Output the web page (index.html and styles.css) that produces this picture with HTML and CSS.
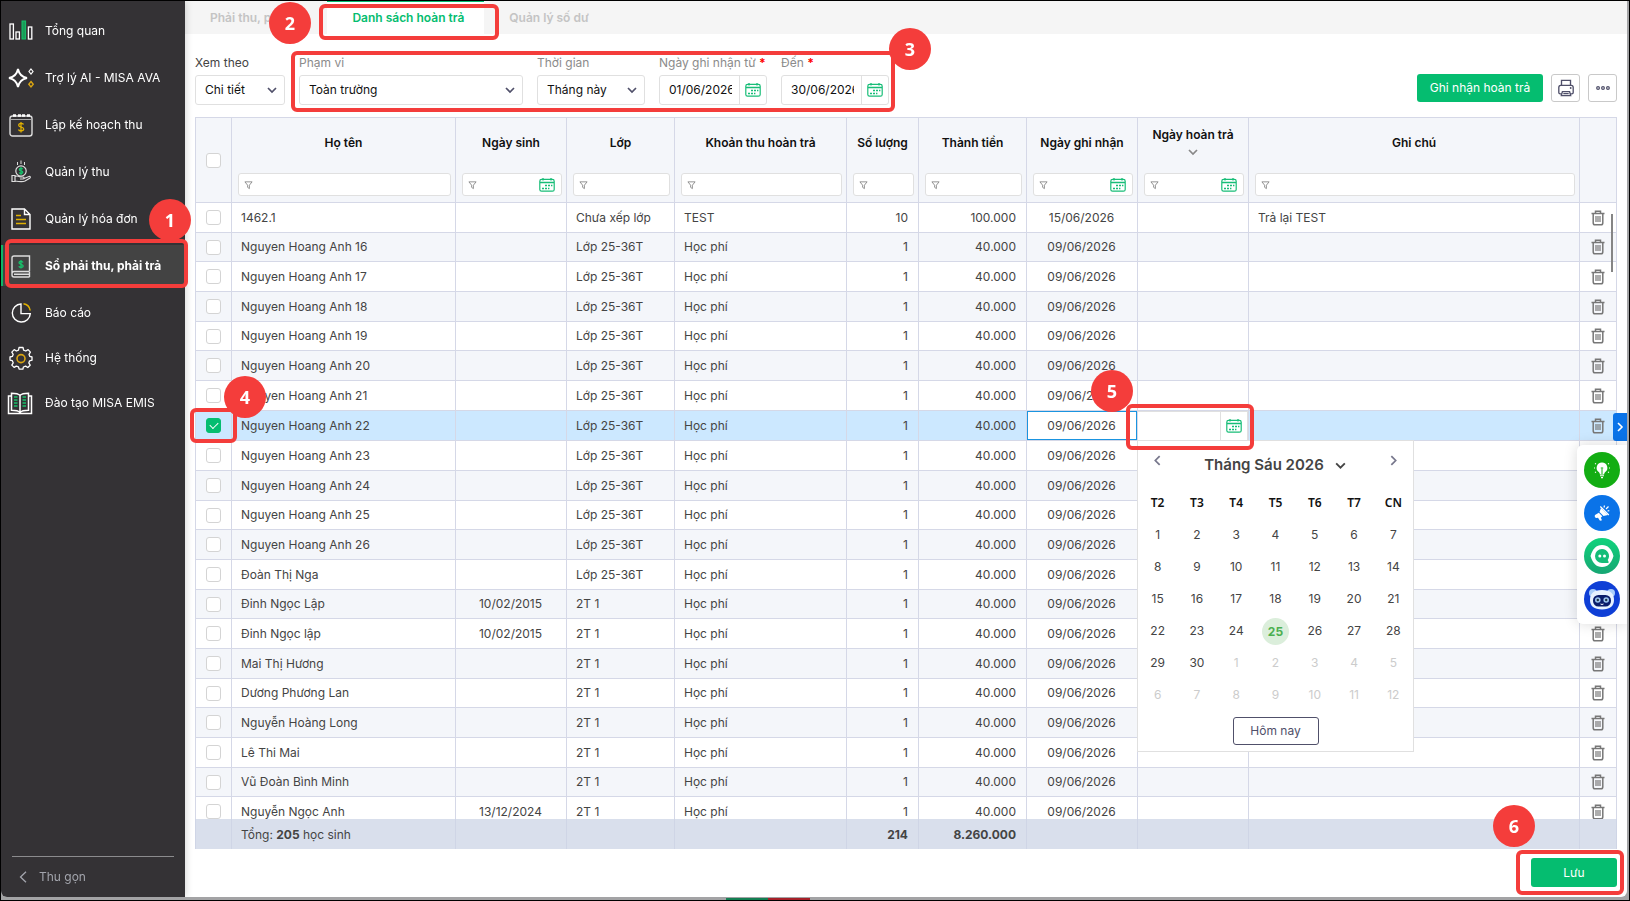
FILE: index.html
```html
<!DOCTYPE html>
<html lang="vi">
<head>
  <meta charset="UTF-8" />
  <title>Sổ phải thu, phải trả – Danh sách hoàn trả</title>
  <link rel="stylesheet" href="styles.css">
</head>
<body>

<!-- icon sprite -->
<svg class="sprite" width="0" height="0" aria-hidden="true">
  <symbol id="i-down" viewBox="0 0 12 12"><path d="M2 4l4 4 4-4" fill="none" stroke="currentColor" stroke-width="1.7"/></symbol>
  <symbol id="i-left" viewBox="0 0 12 12"><path d="M8 2L4 6l4 4" fill="none" stroke="currentColor" stroke-width="1.6"/></symbol>
  <symbol id="i-right" viewBox="0 0 12 12"><path d="M4 2l4 4-4 4" fill="none" stroke="currentColor" stroke-width="1.6"/></symbol>
  <symbol id="i-filter" viewBox="0 0 10 10"><path d="M1 1.5h8L6 5.2V9L4 7.6V5.2z" fill="none" stroke="currentColor" stroke-width="1"/></symbol>
  <symbol id="i-cal" viewBox="0 0 16 14">
    <rect x=".8" y="1.4" width="14.4" height="11.8" rx="1.8" fill="none" stroke="currentColor" stroke-width="1.2"/>
    <path d="M1 4.5h14M4 0v2.6M12 0v2.6" stroke="currentColor" stroke-width="1.3"/>
    <path d="M6 7.4h2M9 7.4h2M12 7.4h1.4M3 10.4h2M6 10.4h2M9 10.4h1.4" stroke="currentColor" stroke-width="1.5"/>
  </symbol>
  <symbol id="i-trash" viewBox="0 0 14 16">
    <path d="M.5 3.4h13M4.5 3V1.2h5V3" fill="none" stroke="currentColor" stroke-width="1.5"/>
    <path d="M2.2 4v9a1.8 1.8 0 0 0 1.8 1.8h6a1.8 1.8 0 0 0 1.8-1.8V4" fill="none" stroke="currentColor" stroke-width="1.5"/>
    <path d="M5 6v6M7 6v6M9 6v6" stroke="currentColor" stroke-width="1.2"/>
  </symbol>
</svg>

<div class="app">
  <aside class="sidebar">
    <nav>
      <ul class="menu">
        <li><a href="#"><svg viewBox="0 0 24 24"><g fill="none" stroke="#fff" stroke-width="1.3"><rect x="1" y="5" width="3.4" height="15"/><rect x="7" y="13" width="3.4" height="7"/><rect x="19.4" y="8" width="3.4" height="12"/></g><rect x="13" y="2" width="3.6" height="18" fill="#1a9c58" stroke="#17c26b"/></svg>Tổng quan</a></li>
        <li><a href="#"><svg class="wide" viewBox="0 0 28 24"><path d="M11 3Q12.500 10.500 20 12 12.500 13.500 11 21 9.500 13.500 2 12 9.500 10.500 11 3z" fill="none" stroke="#fff" stroke-width="1.9"/><path d="M24 3l2 2.500-2 2.500-2-2.500z" fill="none" stroke="#fff" stroke-width="1.2"/><path d="M24 15.500l2.200 2.700-2.200 2.700-2.200-2.700z" fill="none" stroke="#d9a412" stroke-width="1.4"/></svg>Trợ lý AI - MISA AVA</a></li>
        <li><a href="#"><svg viewBox="0 0 24 24"><rect x="1" y="3" width="22" height="20" rx="2.500" fill="none" stroke="#ddd" stroke-width="1.4"/><path d="M1 6.500h22" stroke="#aaa"/><path d="M4 2.500h3M9 2.500h3M13 2.500h3M18 2.500h3" stroke="#fff" stroke-width="2.600"/><path d="M14.500 11.500C14 9.800 9.700 9.800 9.700 12.200c0 2.500 5 1.400 5 3.900 0 2.400-4.600 2.400-5.200.4M12 9v10.500" fill="none" stroke="#e0b000" stroke-width="1.3"/></svg>Lập kế hoạch thu</a></li>
        <li><a href="#"><svg viewBox="0 0 24 24"><circle cx="12" cy="11" r="5.200" fill="none" stroke="#ddd" stroke-width="1.2"/><path d="M8.500 2v3M12 .5v3.500M15.500 2v3" stroke="#ddd"/><path d="M13.700 9.300c-.5-1.300-3.400-1.300-3.400.3 0 1.700 3.500 1 3.500 2.700 0 1.600-3 1.600-3.600.3M12 7v8" fill="none" stroke="#17c26b" stroke-width="1.3"/><path d="M3 15.500h3v6H3zM6 16.500c3-1.500 4 .5 6 .5h2c1.500 0 1.500 2 0 2h-3M15 18.500l5-2c1.400-.3 1.800 1 .7 1.700L16 21c-2 1-7 .5-10 0" fill="none" stroke="#ddd" stroke-width="1.2"/></svg>Quản lý thu</a></li>
        <li><a href="#"><svg viewBox="0 0 24 24"><path d="M3 2h12.500L21 7.500V22H3zM15.500 2v5.500H21" fill="none" stroke="#fff" stroke-width="1.4"/><path d="M7 8.500h5M7 12.500h10M7 16.500h10" stroke="#e0b000" stroke-width="1.5"/></svg>Quản lý hóa đơn</a></li>
        <li><a href="#" class="active"><svg viewBox="0 0 24 24"><path d="M20.500 17V2H5a2 2 0 0 0-2 2v17a2 2 0 0 0 2 2h15.500M20.500 17.500H5c-2 0-2 2.500-2 2.500M5 20.200h15.500M20.500 17.500V23" fill="none" stroke="#ddd" stroke-width="1.4"/><path d="M14 8.500c-.5-1.600-4-1.600-4 .3 0 2 4.200 1.100 4.200 3.100 0 1.900-3.700 1.900-4.400.3M12 6v8.500" fill="none" stroke="#17c26b" stroke-width="1.300"/></svg>Sổ phải thu, phải trả</a></li>
      </ul>
      <ul class="menu menu-more">
        <li><a href="#"><svg viewBox="0 0 24 24"><path d="M12 3a9 9 0 1 0 9.300 9.600H12z" fill="none" stroke="#fff" stroke-width="1.400"/><path d="M14.500 2.800a8 8 0 0 1 6.700 6.700" fill="none" stroke="#e0b000" stroke-width="1.500"/></svg>Báo cáo</a></li>
        <li><a href="#"><svg viewBox="0 0 24 24"><path d="M10 1.500h4l.6 2.600 2.200.9 2.300-1.400 2.300 2.500-1.400 2.200.8 2.100 2.200.6v3.200l-2.400.6-.8 2.100 1.400 2.300-2.400 2.300-2.200-1.400-2.200.9-.5 2.200h-3.800l-.6-2.300-2.200-.8-2.200 1.300-2.300-2.300 1.400-2.300-.9-2.100-2.300-.6V11l2.400-.6.800-2.100-1.400-2.200 2.400-2.500 2.200 1.400 2.100-.9z" fill="none" stroke="#fff" stroke-width="1.300" stroke-linejoin="round"/><circle cx="12" cy="12.600" r="4" fill="none" stroke="#d9a412" stroke-width="1.600"/></svg>Hệ thống</a></li>
        <li><a href="#"><svg class="wide" viewBox="0 0 28 24"><path d="M13 4.500C11 2.300 8 2.300 4.500 2.300v17c3.500 0 6.500 0 8.500 2.200 2-2.200 5-2.200 8.500-2.200v-17c-3.500 0-6.500 0-8.500 2.200zM13 4.500v17M4 5H1.500v17.500h23V5H22" fill="none" stroke="#fff" stroke-width="1.500"/><path d="M7 6h3.500M7 9h3.500M7 12h3.500M7 15h3.500M15.500 6H19M15.500 9H19M15.500 12H19M15.500 15H19" stroke="#17c26b" stroke-width="1.300"/></svg>Đào tạo MISA EMIS</a></li>
      </ul>
    </nav>
    <button class="collapse"><svg viewBox="0 0 8 12"><path d="M7 .7L1.500 6 7 11.300" fill="none" stroke="currentColor" stroke-width="1.300"/></svg>Thu gọn</button>
  </aside>

  <main>
    <nav class="tabs">
      <a href="#">Phải thu, phải trả</a>
      <a href="#" class="active">Danh sách hoàn trả</a>
      <a href="#">Quản lý số dư</a>
    </nav>

    <div class="filters">
      <div class="field dark">
        <label for="view">Xem theo</label>
        <div class="select w-view"><select id="view"><option>Chi tiết</option></select><svg><use href="#i-down"/></svg></div>
      </div>
      <div class="field">
        <label for="scope">Phạm vi</label>
        <div class="select w-scope"><select id="scope"><option>Toàn trường</option></select><svg><use href="#i-down"/></svg></div>
      </div>
      <div class="field">
        <label for="period">Thời gian</label>
        <div class="select"><select id="period"><option>Tháng này</option></select><svg><use href="#i-down"/></svg></div>
      </div>
      <div class="field">
        <label for="from">Ngày ghi nhận từ <b>*</b></label>
        <div class="date"><input type="text" id="from" value="01/06/2026"><button aria-label="Chọn ngày"><svg><use href="#i-cal"/></svg></button></div>
      </div>
      <div class="field">
        <label for="to">Đến <b>*</b></label>
        <div class="date"><input type="text" id="to" value="30/06/2026"><button aria-label="Chọn ngày"><svg><use href="#i-cal"/></svg></button></div>
      </div>
      <div class="actions">
        <button class="primary record">Ghi nhận hoàn trả</button>
        <button class="icon-btn" aria-label="In"><svg viewBox="0 0 18 20"><g fill="none" stroke="#50506a" stroke-width="1.500"><path d="M4 7V1.500h10V7M4.500 16.500H2.500C1.500 16.500 1 16 1 15V9.500C1 8 1.800 7 3 7h12c1.200 0 2 1 2 2.500V15c0 1-.5 1.500-1.500 1.500h-2"/><path d="M5 14h8l1.200 4.500H3.800zM6 16.300h6"/></g><circle cx="14.200" cy="10" r="1" fill="#50506a"/></svg></button>
        <button class="icon-btn" aria-label="Thêm"><svg viewBox="0 0 18 20"><g fill="none" stroke="#50506a" stroke-width="1.400"><circle cx="3.500" cy="10" r="1.500"/><circle cx="9" cy="10" r="1.500"/><circle cx="14.500" cy="10" r="1.500"/></g></svg></button>
      </div>
    </div>

    <div class="grid">
      <table>
        <colgroup>
          <col class="c-check"><col class="c-name"><col class="c-date"><col class="c-mid"><col class="c-fee">
          <col class="c-qty"><col class="c-mid"><col class="c-date"><col class="c-date"><col><col class="c-del">
        </colgroup>
        <thead><tr id="head"></tr></thead>
        <tbody id="rows"></tbody>
        <tfoot>
          <tr>
            <td></td><td>Tổng: <b>205</b> học sinh</td><td></td><td></td><td></td>
            <td class="num"><b>214</b></td><td class="num"><b>8.260.000</b></td><td></td><td></td><td></td><td></td>
          </tr>
        </tfoot>
      </table>
      <i class="scrollbar"></i>
    </div>

    <div class="bottom-bar"><button class="primary save">Lưu</button></div>
  </main>

  <button class="side-tab" aria-label="Mở rộng"><svg><use href="#i-right"/></svg></button>
  <div class="helpers">
    <button aria-label="Gợi ý"><svg viewBox="0 0 36 36"><circle cx="18" cy="18" r="18" fill="#13ad13"/><path d="M18 10.500a5.300 5.300 0 0 0-3 9.700c.6.600.8 1.300.9 2.300h4.200c.1-1 .3-1.700.9-2.300a5.300 5.300 0 0 0-3-9.700zM16 23.300h4v1h-4zM17 25h2v1.200h-2z" fill="#fff"/><path d="M18 22v-5.500M16.800 16h2.400" stroke="#13ad13" fill="none"/><path d="M10 16h1M11 11.500l1 .6M11 20.500l1-.6M26 16h-1M25 11.500l-1 .6M25 20.500l-1-.6" stroke="#fff" stroke-width="1.200"/></svg></button>
    <button aria-label="Thông báo"><svg viewBox="0 0 36 36"><circle cx="18" cy="18" r="18" fill="#0a73e8"/><path d="M17 13l7 7-4.500 1L15.500 17zM14.800 17.800l3.500 3.500-1.500 1.500 1.200 2.500-2 .5-2-3-1.500.3a2 2 0 0 1-1.500-3z" fill="#fff"/><path d="M16.300 11.500l8.500 8.500M20 12.500l.5-2M22 14l2.500-2.500M23.500 16l1.800-.4" stroke="#fff" stroke-width="1.200"/></svg></button>
    <button aria-label="Trò chuyện"><svg viewBox="0 0 36 36"><defs><linearGradient id="g1" x1="0" y1="0" x2="0" y2="1"><stop offset="0" stop-color="#10d37c"/><stop offset="1" stop-color="#17a673"/></linearGradient></defs><circle cx="18" cy="18" r="18" fill="url(#g1)"/><path d="M18 7c6 0 9 3.500 11.500 11C27 25.500 24 29 18 29S9 25.500 6.500 18C9 10.500 12 7 18 7z" fill="#fff"/><path d="M18 11a7 7 0 1 0 0 14h6.500v-1.500L23.700 22A7 7 0 0 0 18 11z" fill="#14bd78"/><circle cx="15.800" cy="18" r="1.500" fill="#fff"/><circle cx="20.500" cy="18" r="1.500" fill="#fff"/></svg></button>
    <button aria-label="MISA AVA"><svg viewBox="0 0 36 36"><circle cx="18" cy="18" r="18" fill="#0f3fd6"/><circle cx="9" cy="12" r="4" fill="#a9cdfb"/><circle cx="27" cy="12" r="4" fill="#a9cdfb"/><path d="M18 9c9 0 12 4 12 10s-4 9.500-12 9.500S6 25 6 19 9 9 18 9z" fill="#e8f2ff"/><rect x="9" y="14" width="18" height="11.500" rx="5.500" fill="#0b1d6b"/><circle cx="13.800" cy="19" r="2.800" fill="#9cc4ef"/><circle cx="22.200" cy="19" r="2.800" fill="#9cc4ef"/><circle cx="13.800" cy="19" r="1.200" fill="#234"/><circle cx="22.200" cy="19" r="1.200" fill="#234"/><path d="M16.500 23q1.500 1 3 0" stroke="#fff" fill="none"/></svg></button>
  </div>
</div>

<!-- step-by-step guide marks -->
<div class="guide">
  <i class="box box-1"></i><span class="step step-1">1</span>
  <i class="box box-2"></i><span class="step step-2">2</span>
  <i class="box box-3"></i><span class="step step-3">3</span>
  <i class="box box-4"></i><span class="step step-4">4</span>
  <i class="box box-5"></i><span class="step step-5">5</span>
  <i class="box box-6"></i><span class="step step-6">6</span>
</div>

<script src="app.js"></script>
</body>
</html>
```

FILE: styles.css
```css
* {
  box-sizing: border-box;
}

body {
  margin: 0;
  height: 100vh;
  padding: 0 2px 3px 0;
  border: 1px solid #000;
  background: linear-gradient(90deg, #137f52 50%, #a62028 50%) 726px 100% / 84px 3px no-repeat #a3a3a5;
  font-family: Inter, "Noto Sans", sans-serif;
  font-size: 12px;
  line-height: 16px;
  color: #444;
  position: relative;
  overflow: hidden;
}

button, input, select {
  font: inherit;
  color: inherit;
  margin: 0;
}

button {
  padding: 0;
  border: none;
  background: none;
  cursor: pointer;
}

a {
  color: inherit;
  text-decoration: none;
}

svg {
  width: 12px;
  height: 12px;
  flex: none;
}

.sprite {
  position: absolute;
}

.app {
  height: 100%;
  display: flex;
  background: #fff;
  border-radius: 0 0 6px 6px;
  overflow: hidden;
  position: relative;
}

/* sidebar */
.sidebar {
  width: 184px;
  flex: none;
  display: flex;
  flex-direction: column;
  background: #343235;
  color: #fff;
  box-shadow: 0 0 8px rgba(0,0,0,0.2);
  z-index: 1;
}

.sidebar nav {
  flex: 1;
  padding-top: 9px;
}

.menu {
  list-style: none;
  margin: 0;
  padding: 0;
  display: flex;
  flex-direction: column;
  gap: 6px;
}

.menu-more {
  gap: 4px;
  margin-top: 6px;
}

.menu a {
  display: flex;
  align-items: center;
  gap: 12px;
  height: 41px;
  padding-left: 8px;
}

.menu svg {
  width: 24px;
  height: 24px;
}

.menu svg.wide {
  width: 28px;
  margin: 0 -2px;
}

.menu a.active {
  background: #434343;
  box-shadow: inset 2px 0 #10b566;
  font-weight: bold;
}

.collapse {
  display: flex;
  align-items: center;
  gap: 12px;
  height: 41px;
  margin: 0 11px;
  padding-left: 7px;
  border-top: 1px solid #8b8b8d;
  color: #a3a5ad;
}

.collapse svg {
  width: 8px;
}

/* main area */
main {
  flex: 1;
  min-width: 0;
  display: flex;
  flex-direction: column;
}

.tabs {
  display: flex;
  height: 33px;
  background: #f5f5f5;
  font-weight: 600;
  color: #c4c4c4;
}

.tabs a {
  padding: 9px 20px 0 25px;
}

.tabs a.active {
  background: #fff;
  color: #05bd70;
  box-shadow: inset 0 1px #05bd70;
}

.filters {
  display: flex;
  gap: 14px;
  padding: 21px 10px 12px;
}

.field label {
  display: block;
  margin-bottom: 4px;
  color: #8b8b8b;
}

.field.dark label {
  color: #444;
}

.field b {
  color: #f00;
}

.select {
  position: relative;
  width: 108px;
}

.w-view {
  width: 90px;
}

.w-scope {
  width: 224px;
}

.select select {
  width: 100%;
  height: 30px;
  padding: 0 9px;
  border: 1px solid #e0e0e0;
  border-radius: 3px;
  background: #fff;
  color: #111;
  appearance: none;
}

.select svg {
  position: absolute;
  right: 7px;
  top: 9px;
  color: #50506a;
  pointer-events: none;
}

.date {
  display: flex;
  width: 108px;
  height: 30px;
  border: 1px solid #e0e0e0;
  border-radius: 3px;
}

.date input {
  flex: 1;
  min-width: 0;
  padding: 0;
  margin: 0 7px 0 9px;
  border: none;
  outline: none;
  background: none;
  color: #111;
}

.date button {
  width: 27px;
  border-left: 1px solid #e0e0e0;
  color: #17bd77;
}

.date button svg,
.search .cal {
  display: block;
  width: 16px;
  height: 14px;
  margin: auto;
}

.actions {
  display: flex;
  gap: 8px;
  margin-left: auto;
  padding-top: 19px;
}

.primary {
  background: #05bd70;
  color: #fff;
  border-radius: 3px;
}

.record {
  width: 126px;
  height: 28px;
}

.icon-btn {
  width: 29px;
  height: 28px;
  border: 1px solid #c9c9c9;
  border-radius: 3px;
}

.icon-btn svg {
  display: block;
  width: 18px;
  height: 18px;
  margin: auto;
}

/* table */
.grid {
  flex: 1;
  min-height: 0;
  margin: 0 10px;
  overflow: hidden;
  position: relative;
}

table {
  width: 100%;
  table-layout: fixed;
  border-collapse: separate;
  border-spacing: 0;
}

.c-check { width: 37px; }
.c-name { width: 224px; }
.c-date { width: 111px; }
.c-mid { width: 108px; }
.c-fee { width: 172px; }
.c-qty { width: 72px; }
.c-del { width: 37px; }

th, td {
  border: 1px solid #d5d8e7;
  border-width: 0 1px 1px 0;
  padding: 0 10px 0 9px;
  text-align: left;
  white-space: nowrap;
}

th:first-child, td:first-child {
  border-left-width: 1px;
  padding: 0;
  text-align: center;
}

td:last-child {
  padding: 0 1px 0 0;
  text-align: center;
}

th {
  height: 86px;
  border-top-width: 1px;
  padding: 0 4px 6px 6px;
  background: #f4f6fa;
  font-weight: 600;
  color: #111;
  vertical-align: bottom;
}

th:first-child {
  padding: 0;
  vertical-align: middle;
}

th .title {
  display: flex;
  flex-direction: column;
  align-items: center;
  justify-content: center;
  gap: 3px;
  height: 55px;
  padding: 0 2px 6px 0;
}

th .title svg {
  color: #888;
}

.search {
  display: flex;
  align-items: center;
  height: 23px;
  padding: 0 6px 0 5px;
  border: 1px solid #e0e0e0;
  border-radius: 3px;
  background: #fff;
  color: #888;
}

.search svg {
  width: 9px;
  height: 10px;
}

.search input {
  flex: 1;
  width: 0;
  min-width: 0;
  border: none;
  outline: none;
  background: none;
}

.search .cal {
  width: 16px;
  height: 14px;
  margin: 0;
  color: #17bd77;
}

tbody tr {
  height: 30px;
}

tbody tr:nth-child(3n+2) {
  height: 29px;
}

tbody tr:nth-child(even) {
  background: #f4f6fa;
}

tbody tr.selected {
  background: #cce8ff;
}

.num {
  text-align: right;
}

.center {
  text-align: center;
}

input[type="checkbox"] {
  appearance: none;
  display: block;
  width: 15px;
  height: 15px;
  margin: auto;
  border: 1px solid #d4d4d4;
  border-radius: 3px;
  background: #fff;
}

input[type="checkbox"]:checked {
  border-color: #05bd70;
  background: #05bd70;
}

input[type="checkbox"]:checked::after {
  content: "";
  display: block;
  width: 7px;
  height: 4px;
  margin: 3px;
  border: solid #fff;
  border-width: 0 0 1px 1px;
  transform: rotate(-45deg);
}

td button.delete {
  display: block;
  margin: auto;
  color: #777;
}

td button.delete svg {
  display: block;
  width: 14px;
  height: 16px;
}

td.focused {
  background: #fff;
  box-shadow: inset 0 0 0 1px #1a94e0;
}

td.editing {
  position: relative;
  padding: 0;
  background: #fff;
}

td.editing .date {
  width: auto;
  height: 29px;
  border-width: 1px 1px 0 0;
  border-radius: 0;
}

tfoot td {
  position: sticky;
  bottom: 0;
  height: 30px;
  padding-top: 2px;
  background: #d9dfec;
  border-color: #cfd5e6;
  border-width: 0 1px 0 0;
}

.scrollbar {
  position: absolute;
  right: 4px;
  top: 97px;
  width: 2px;
  height: 58px;
  background: #858585;
}

/* date picker */
.picker {
  position: absolute;
  z-index: 3;
  top: 100%;
  left: -1px;
  width: 277px;
  padding-bottom: 6px;
  border: 1px solid #e0e0e0;
  background: #fff;
  text-align: center;
}

.picker-head {
  display: flex;
  justify-content: space-between;
  height: 46px;
  padding: 13px 13px 0;
  color: #77778c;
}

.picker-head button {
  display: flex;
  height: 16px;
}

.picker-head svg {
  width: 13px;
  height: 13px;
}

.picker-head .month {
  align-items: center;
  gap: 10px;
  height: 22px;
  font-size: 15px;
  font-weight: 600;
  color: #444;
}

.picker table th,
.picker table td {
  height: 32px;
  padding: 0;
  border: none;
  background: none;
  text-align: center;
  vertical-align: middle;
}

.picker table th {
  font-family: "Noto Sans", sans-serif;
}

.picker table tr:nth-child(n) {
  height: 32px;
  background: none;
}

.picker td.out {
  color: #ccc;
}

.picker td.today span {
  display: block;
  width: 27px;
  margin: auto;
  line-height: 27px;
  border-radius: 50%;
  background: #dbeedb;
  color: #4caf50;
  font-weight: bold;
}

.picker .now {
  width: 86px;
  height: 28px;
  margin-top: 6px;
  border: 1px solid #50506a;
  border-radius: 3px;
  color: #50506a;
}

.bottom-bar {
  display: flex;
  justify-content: flex-end;
  padding: 9px 10px 10px;
}

.save {
  width: 86px;
  height: 29px;
}

/* floating helpers */
.side-tab {
  position: absolute;
  z-index: 2;
  right: 0;
  top: 412px;
  width: 14px;
  height: 28px;
  border-radius: 3px 0 0 3px;
  background: #0a73e8;
  color: #fff;
}

.side-tab svg {
  display: block;
  margin: auto;
}

.helpers {
  position: absolute;
  z-index: 2;
  right: 0;
  top: 444px;
  display: flex;
  flex-direction: column;
  gap: 7px;
  padding: 7px;
  border-radius: 6px 0 0 6px;
  background: #fff;
  box-shadow: 0 0 14px rgba(0,0,0,0.15);
}

.helpers svg {
  display: block;
  width: 36px;
  height: 36px;
}

/* guide marks */
.guide {
  position: absolute;
  z-index: 5;
  inset: -1px;
  pointer-events: none;
}

.box {
  position: absolute;
  border: 4px solid #f43d3b;
  border-radius: 6px;
}

.step {
  position: absolute;
  width: 42px;
  height: 42px;
  border-radius: 50%;
  background: #f43d3b;
  color: #fff;
  font: bold 18px/42px "Open Sans", sans-serif;
  text-align: center;
}

.box-1 { left: 5px; top: 239px; width: 183px; height: 49px; }
.box-2 { left: 319px; top: 4px; width: 180px; height: 36px; }
.box-3 { left: 291px; top: 51px; width: 604px; height: 61px; }
.box-4 { left: 190px; top: 408px; width: 47px; height: 35px; }
.box-5 { left: 1126px; top: 404px; width: 128px; height: 46px; }
.box-6 { right: 6px; bottom: 6px; width: 108px; height: 45px; }

.step-1 { left: 149px; top: 199px; }
.step-2 { left: 269px; top: 2px; }
.step-3 { left: 889px; top: 28px; }
.step-4 { left: 224px; top: 376px; }
.step-5 { left: 1091px; top: 370px; }
.step-6 { right: 95px; bottom: 54px; }
```

FILE: app.js
```js
const icon = (name, cls = '') => `<svg class="${cls}"><use href="#i-${name}"/></svg>`;

// [title, has date filter, is sorted]
const columns = [
  ['Họ tên'], ['Ngày sinh', true], ['Lớp'], ['Khoản thu hoàn trả'], ['Số lượng'],
  ['Thành tiền'], ['Ngày ghi nhận', true], ['Ngày hoàn trả', true, true], ['Ghi chú']
];

document.getElementById('head').innerHTML =
  '<th><input type="checkbox" aria-label="Chọn tất cả"></th>' +
  columns.map(([title, date, sorted]) => `
    <th>
      <div class="title">${title}${sorted ? icon('down') : ''}</div>
      <div class="search">${icon('filter')}<input type="text" aria-label="Lọc ${title}">${date ? icon('cal', 'cal') : ''}</div>
    </th>`).join('') + '<th></th>';

const students = [
  { name: '1462.1', cls: 'Chưa xếp lớp', fee: 'TEST', qty: 10, amount: '100.000', date: '15/06/2026', note: 'Trả lại TEST' }
];
for (let i = 16; i <= 26; i++) {
  students.push({ name: `Nguyen Hoang Anh ${i}`, cls: 'Lớp 25-36T', selected: i === 22 });
}
students.push(
  { name: 'Đoàn Thị Nga', cls: 'Lớp 25-36T' },
  { name: 'Đinh Ngọc Lập', cls: '2T 1', birth: '10/02/2015' },
  { name: 'Đinh Ngọc lập', cls: '2T 1', birth: '10/02/2015' },
  { name: 'Mai Thị Hương', cls: '2T 1' },
  { name: 'Dương Phương Lan', cls: '2T 1' },
  { name: 'Nguyễn Hoàng Long', cls: '2T 1' },
  { name: 'Lê Thi Mai', cls: '2T 1' },
  { name: 'Vũ Đoàn Bình Minh', cls: '2T 1' },
  { name: 'Nguyễn Ngọc Anh', cls: '2T 1', birth: '13/12/2024' }
);

// June 2026 starts on Monday, six weeks are shown
function picker() {
  let weeks = '';
  for (let w = 0; w < 6; w++) {
    weeks += '<tr>';
    for (let d = 1; d <= 7; d++) {
      const day = w * 7 + d;
      const cls = day > 30 ? 'out' : day === 25 ? 'today' : '';
      weeks += `<td class="${cls}"><span>${day > 30 ? day - 30 : day}</span></td>`;
    }
    weeks += '</tr>';
  }
  return `
    <div class="picker">
      <div class="picker-head">
        <button aria-label="Tháng trước">${icon('left')}</button>
        <button class="month">Tháng Sáu 2026 ${icon('down')}</button>
        <button aria-label="Tháng sau">${icon('right')}</button>
      </div>
      <table>
        <tr>${['T2', 'T3', 'T4', 'T5', 'T6', 'T7', 'CN'].map(d => `<th>${d}</th>`).join('')}</tr>
        ${weeks}
      </table>
      <button class="now">Hôm nay</button>
    </div>`;
}

const editor = `
  <div class="date"><input type="text" aria-label="Ngày hoàn trả"><button aria-label="Chọn ngày">${icon('cal')}</button></div>
  ${picker()}`;

document.getElementById('rows').innerHTML = students.map(s => `
  <tr class="${s.selected ? 'selected' : ''}">
    <td><input type="checkbox" aria-label="Chọn ${s.name}" ${s.selected ? 'checked' : ''}></td>
    <td>${s.name}</td>
    <td class="center">${s.birth || ''}</td>
    <td>${s.cls}</td>
    <td>${s.fee || 'Học phí'}</td>
    <td class="num">${s.qty || 1}</td>
    <td class="num">${s.amount || '40.000'}</td>
    <td class="center ${s.selected ? 'focused' : ''}">${s.date || '09/06/2026'}</td>
    ${s.selected ? `<td class="editing">${editor}</td>` : '<td></td>'}
    <td>${s.note || ''}</td>
    <td><button class="delete" aria-label="Xóa">${icon('trash')}</button></td>
  </tr>`).join('');
```
